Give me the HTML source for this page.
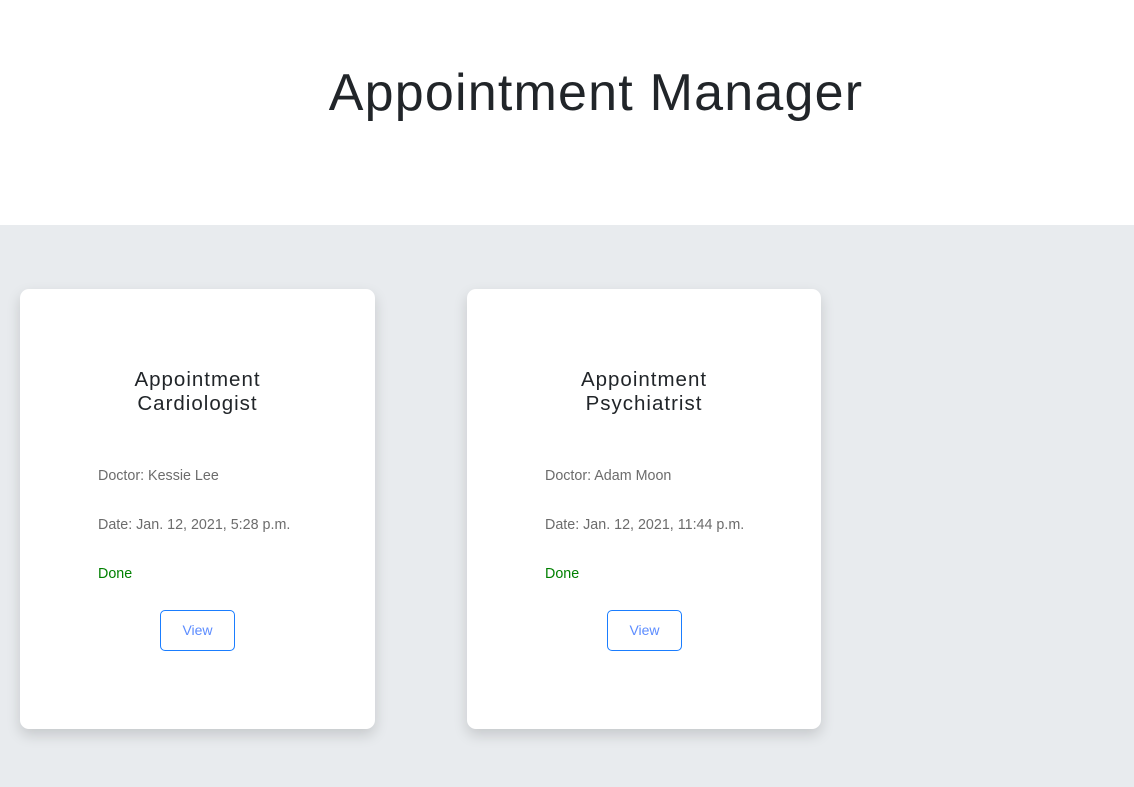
<!DOCTYPE html>
<html><head><style>
body{margin:0;width:1134px;height:787px;background:#fff;font-family:"Liberation Sans",sans-serif;overflow:hidden}
.top{height:225px;position:relative}
h1{position:absolute;left:0;width:1192px;top:63px;margin:0;text-align:center;font-weight:400;font-size:52px;color:#212529;line-height:60px;letter-spacing:1.2px}
.bg{position:absolute;top:225px;left:0;width:1134px;height:562px;background:#e8ebee}
.card{position:absolute;top:289px;width:355px;height:440px;background:#fff;border-radius:9px;box-shadow:0 6px 14px rgba(0,0,0,0.15)}
.t{position:absolute;width:355px;text-align:center;font-size:20.5px;line-height:24px;color:#212529;letter-spacing:1px}
.p{position:absolute;left:78px;font-size:14.3px;color:#6c6c6c;font-weight:300}
.btn{position:absolute;left:140px;top:321px;width:73px;height:39px;border:1px solid #1a7dff;border-radius:5px;color:#5c8cff;font-size:14px;text-align:center;line-height:39px}
</style></head><body>
<div class="top"><h1>Appointment Manager</h1></div>
<div class="bg"></div>
<div class="card" style="left:20px">
<div class="t" style="top:79px">Appointment<br>Cardiologist</div>
<div class="p" style="top:179px">Doctor: Kessie Lee</div>
<div class="p" style="top:228px">Date: Jan. 12, 2021, 5:28 p.m.</div>
<div class="p" style="top:277px;color:#008000">Done</div>
<div class="btn">View</div>
</div>
<div class="card" style="left:467px;width:354px">
<div class="t" style="top:79px;width:354px">Appointment<br>Psychiatrist</div>
<div class="p" style="top:179px">Doctor: Adam Moon</div>
<div class="p" style="top:228px">Date: Jan. 12, 2021, 11:44 p.m.</div>
<div class="p" style="top:277px;color:#008000">Done</div>
<div class="btn">View</div>
</div>
</body></html>
